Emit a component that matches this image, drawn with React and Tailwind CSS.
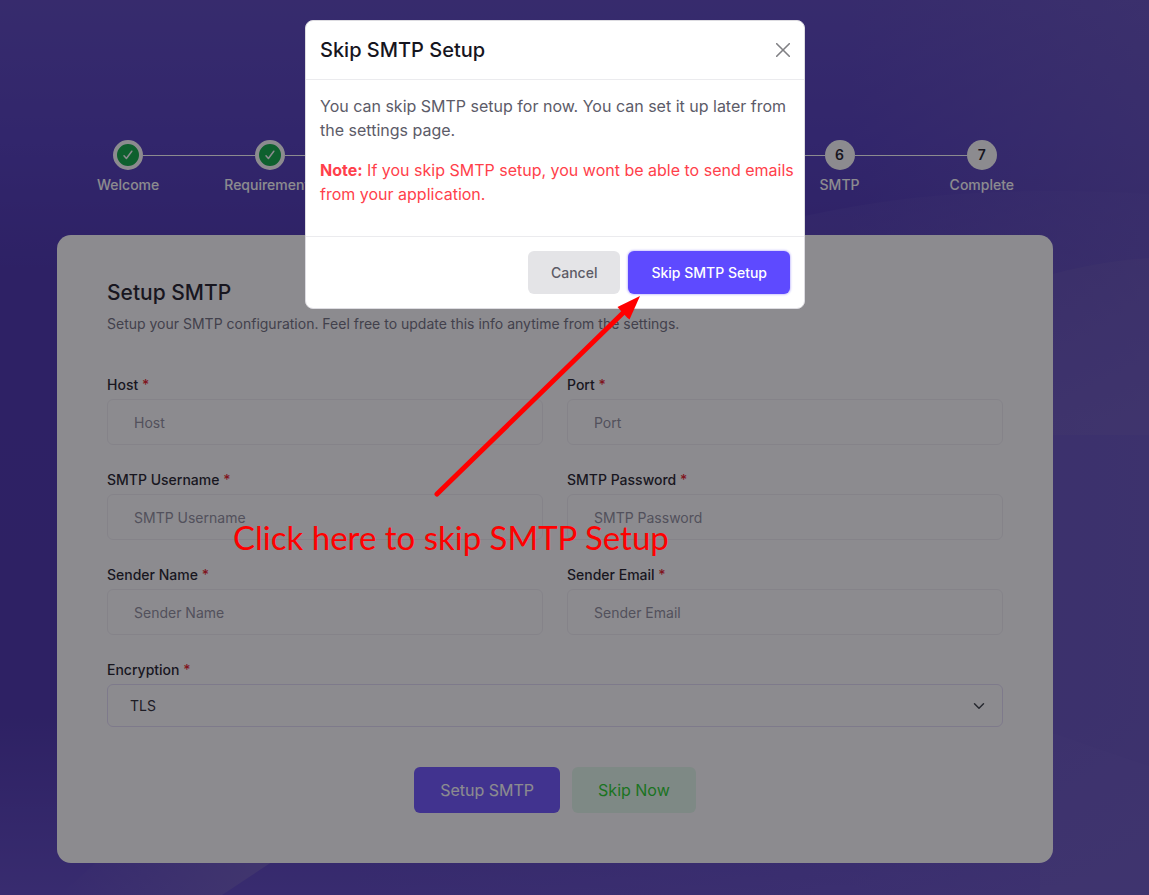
const STEPS = [
  { label: "Welcome", done: true },
  { label: "Requirements", done: true },
  { done: true },
  { done: true },
  { done: true },
  { label: "SMTP", done: false },
  { label: "Complete", done: false },
];

const FIELDS = [
  { id: "host", label: "Host", type: "text" },
  { id: "port", label: "Port", type: "text" },
  { id: "username", label: "SMTP Username", type: "text" },
  { id: "password", label: "SMTP Password", type: "password" },
  { id: "sender-name", label: "Sender Name", type: "text" },
  { id: "sender-email", label: "Sender Email", type: "email" },
];

/** Purple gradient with the soft diagonal facets behind the installer. */
function Backdrop() {
  return (
    <svg
      className="absolute inset-0 h-full w-full"
      viewBox="0 0 1149 895"
      preserveAspectRatio="none"
      aria-hidden
    >
      <defs>
        <linearGradient id="base" x1="0" y1="0" x2="0" y2="1">
          <stop offset="0" stopColor="#543fbb" />
          <stop offset="0.16" stopColor="#4a34b8" />
          <stop offset="0.3" stopColor="#422bab" />
          <stop offset="0.8" stopColor="#422ba8" />
          <stop offset="1" stopColor="#5740bf" />
        </linearGradient>
        <linearGradient id="side" gradientUnits="userSpaceOnUse" x1="850" y1="0" x2="1149" y2="0">
          <stop offset="0" stopColor="#6552b8" stopOpacity="0" />
          <stop offset="1" stopColor="#6552b8" stopOpacity="0.5" />
        </linearGradient>
        <linearGradient id="lower" gradientUnits="userSpaceOnUse" x1="0" y1="190" x2="0" y2="420">
          <stop offset="0" stopColor="#6552bf" stopOpacity="0.15" />
          <stop offset="1" stopColor="#6552bf" stopOpacity="0.7" />
        </linearGradient>
        <linearGradient id="bottom" gradientUnits="userSpaceOnUse" x1="350" y1="0" x2="900" y2="0">
          <stop offset="0" stopColor="#6a56c4" stopOpacity="0" />
          <stop offset="1" stopColor="#6a56c4" stopOpacity="0.35" />
        </linearGradient>
        <linearGradient id="facet" x1="0" y1="0" x2="1" y2="0">
          <stop offset="0" stopColor="#7461bd" stopOpacity="0" />
          <stop offset="1" stopColor="#7461bd" stopOpacity="0.7" />
        </linearGradient>
      </defs>
      <rect width="1149" height="895" fill="url(#base)" />
      <rect x="850" width="299" height="895" fill="url(#side)" />
      <path d="M805 216 C900 195 1000 186 1149 194 V895 H1040 V235 H805Z" fill="url(#lower)" />
      <path d="M350 850 H1040 V895 H350Z" fill="url(#bottom)" />
      <path d="M1000 290 Q1080 262 1149 258 V435 H1000 Z" fill="#7765b8" fillOpacity="0.2" />
      <path d="M1050 732 L1149 766 V895 H1040 V863 Z" fill="#7765c8" fillOpacity="0.1" />
      <path d="M60 895 L110 850 H290 L222 895 Z" fill="url(#facet)" />
    </svg>
  );
}

function Step({ label, done, number, first, last }) {
  return (
    <li className="flex min-w-0 flex-1 flex-col items-center">
      <div className="flex w-full items-center">
        <span className={first ? "h-px flex-1" : "h-px flex-1 bg-white"} />
        {done ? (
          <span className="flex size-[30px] items-center justify-center rounded-full border-4 border-white bg-[#02a83d] text-white">
            <svg width="12" height="12" viewBox="0 0 12 12" fill="none" stroke="currentColor" aria-hidden>
              <path d="M2 6.8 4.400 9.500 9.800 2.200" strokeWidth="1.5" strokeLinecap="round" strokeLinejoin="round" />
            </svg>
          </span>
        ) : (
          <span className="flex size-[30px] items-center justify-center rounded-full bg-white text-sm font-semibold text-[#16151e]">
            {number}
          </span>
        )}
        <span className={last ? "h-px flex-1" : "h-px flex-1 bg-white"} />
      </div>
      {label && <span className="pt-1 text-sm leading-[22px] font-medium text-white">{label}</span>}
    </li>
  );
}

function FieldLabel({ htmlFor, children }) {
  return (
    <label htmlFor={htmlFor} className="mb-1 block text-sm leading-[21px] font-medium text-[#16151e]">
      {children} <span className="text-[#e8121c]">*</span>
    </label>
  );
}

function SetupCard() {
  return (
    <form className="rounded-[14px] bg-white px-[50px] pt-10 pb-[50px]">
      <h1 className="text-[21px] leading-[35px] font-medium text-[#16151e]">Setup SMTP</h1>
      <p className="text-sm leading-7 text-[#6b6a78]">
        Setup your SMTP configuration. Feel free to update this info anytime from the settings.
      </p>

      <div className="mt-9 grid grid-cols-2 gap-6">
        {FIELDS.map(({ id, label, type }) => (
          <div key={id}>
            <FieldLabel htmlFor={id}>{label}</FieldLabel>
            <input
              id={id}
              type={type}
              placeholder={label}
              className="block h-[46px] w-full rounded-md border border-[#f0eff3] px-[26px] text-sm text-[#16151e] placeholder:text-[#8b8a98]"
            />
          </div>
        ))}

        <div className="col-span-2">
          <FieldLabel htmlFor="encryption">Encryption</FieldLabel>
          <div className="relative">
            <select
              id="encryption"
              className="block h-[43px] w-full appearance-none rounded-md border border-[#e2dcf7] px-[22px] text-sm text-[#23222b]"
            >
              <option>TLS</option>
              <option>SSL</option>
            </select>
            <svg
              className="pointer-events-none absolute top-4 right-[18px]"
              width="12"
              height="12"
              viewBox="0 0 16 16"
              fill="none"
              stroke="#343a40"
              strokeWidth="2"
              strokeLinecap="round"
              strokeLinejoin="round"
              aria-hidden
            >
              <path d="m2 5 6 6 6-6" />
            </svg>
          </div>
        </div>
      </div>

      <div className="mt-10 flex justify-center gap-3">
        <button type="submit" className="h-[46px] rounded-md bg-[#684fff] px-[26px] text-base text-white">
          Setup SMTP
        </button>
        <button type="button" className="h-[46px] rounded-md bg-[#e3faea] px-[26px] text-base text-[#1bd01f]">
          Skip Now
        </button>
      </div>
    </form>
  );
}

function SkipDialog() {
  return (
    <div
      role="dialog"
      aria-modal="true"
      aria-labelledby="skip-title"
      className="w-full max-w-[500px] rounded-lg border border-[#dddce1] bg-white"
    >
      <div className="flex items-center justify-between border-b border-[#ebebee] p-3.5">
        <h2 id="skip-title" className="text-xl leading-[30px] font-medium text-[#16151e]">
          Skip SMTP Setup
        </h2>
        <button type="button" aria-label="Close" className="text-[#808084]">
          <svg width="14" height="14" viewBox="0 0 14 14" fill="none" stroke="currentColor" aria-hidden>
            <path d="M0.7 0.7 13.3 13.3M13.3 0.7 0.7 13.3" strokeWidth="1.6" strokeLinecap="round" />
          </svg>
        </button>
      </div>

      <div className="py-3.5 pr-1 pl-3.5 text-base leading-6">
        <p className="mb-4 text-[#5c5b68]">
          You can skip SMTP setup for now. You can set it up later from the settings page.
        </p>
        <p className="mb-4 text-[#ff3f4b]">
          <strong className="font-bold">Note:</strong> If you skip SMTP setup, you wont be able to send
          emails from your application.
        </p>
      </div>

      <div className="flex justify-end gap-2 border-t border-[#ebebee] p-3.5">
        <button type="button" className="h-[43px] rounded-md bg-[#e4e4e7] px-[23px] text-sm font-medium text-[#5c5b66]">
          Cancel
        </button>
        <button
          type="button"
          className="h-[43px] rounded-md bg-[#5e4aff] px-[23px] text-sm font-medium text-white shadow-[0_0_2px_1px_#cfc9ff]"
        >
          Skip SMTP Setup
        </button>
      </div>
    </div>
  );
}

/** Red arrow and caption pointing at the confirm button. */
function Callout() {
  return (
    <div className="pointer-events-none absolute top-[294px] left-[233px]">
      <svg className="ml-[197px]" width="214" height="206" viewBox="0 0 214 206" aria-hidden>
        <path d="M7 200 196 16" stroke="#ff0000" strokeWidth="5" strokeLinecap="round" />
        <path d="M210 2 187.500 13 191 17 197 23.500 199.500 25.500Z" fill="#ff0000" />
      </svg>
      <p className="mt-4 font-['Lato',sans-serif] text-[33px] leading-[42px] whitespace-nowrap text-[#ff0000]">
        Click here to skip SMTP Setup
      </p>
    </div>
  );
}

export default function App() {
  return (
    <div className="relative min-h-screen overflow-hidden font-['Inter',sans-serif]">
      <Backdrop />

      <main className="relative pt-[140px] pr-24 pb-8 pl-[57px]">
        <ol className="mb-[39px] flex">
          {STEPS.map((step, i) => (
            <Step
              key={i}
              label={step.label}
              done={step.done}
              number={i + 1}
              first={i === 0}
              last={i === STEPS.length - 1}
            />
          ))}
        </ol>
        <SetupCard />
      </main>

      <div className="absolute inset-0 bg-[#19171f]/50" />
      <div className="absolute inset-x-0 top-5 flex justify-center pr-[39px]">
        <SkipDialog />
      </div>
      <Callout />
    </div>
  );
}
